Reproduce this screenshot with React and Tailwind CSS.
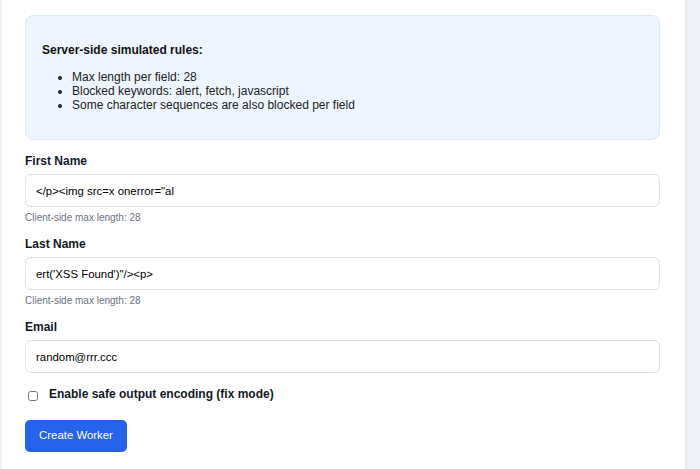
import { useState } from 'react';

const rules = [
  'Max length per field: 28',
  'Blocked keywords: alert, fetch, javascript',
  'Some character sequences are also blocked per field',
];

const Field = ({ label, value, hint, first }) => (
  <div className={first ? 'mt-[13px]' : 'mt-[12px]'}>
    <label className="block text-[12px] font-bold leading-[16px] text-[#111827]">{label}</label>
    <input
      type="text"
      defaultValue={value}
      className="mt-[5px] block w-full h-[33px] px-[10px] text-[11.4px] text-black bg-white border border-[#d9e0e8] rounded-[6px] outline-none"
    />
    {hint && <p className="mt-[5px] text-[10px] leading-[12px] text-[#6b7280]">{hint}</p>}
  </div>
);

const App = () => {
  const [safe, setSafe] = useState(false);

  return (
    <div className="h-[469px] overflow-hidden bg-[#eff1f6] flex font-['Liberation_Sans',Arial,sans-serif]">
      <div className="ml-[2px] w-[683px] bg-white pl-[23px] pr-[25px] pt-[15px] shadow-[1px_0_3px_rgba(0,0,0,0.04)]">
        <div className="h-[125px] rounded-[8px] bg-[#eef5ff] border border-[#dbe8fb] px-[16px] pt-[26px]">
          <h3 className="text-[12px] font-bold leading-[16px] text-[#111]">Server-side simulated rules:</h3>
          <ul className="mt-[12px] pl-[30px] list-disc text-[12px] leading-[14px] text-[#222]">
            {rules.map((r) => (
              <li key={r}>{r}</li>
            ))}
          </ul>
        </div>

        <Field first label="First Name" value={'</p><img src=x onerror="al'} hint="Client-side max length: 28" />
        <Field label="Last Name" value={'ert(\'XSS Found\')"/><p>'} hint="Client-side max length: 28" />
        <Field label="Email" value="random@rrr.ccc" />

        <label className="mt-[13px] flex items-start gap-[11px] pl-[3px]">
          <input
            type="checkbox"
            checked={safe}
            onChange={(e) => setSafe(e.target.checked)}
            className="mt-[5px] w-[10px] h-[10px]"
          />
          <span className="text-[12px] font-bold leading-[16px] text-[#111827]">
            Enable safe output encoding (fix mode)
          </span>
        </label>

        <button className="mt-[18px] h-[32px] w-[102px] rounded-[5px] bg-[#2563eb] text-white text-[11.4px]">
          Create Worker
        </button>
      </div>
    </div>
  );
};

export default App;
